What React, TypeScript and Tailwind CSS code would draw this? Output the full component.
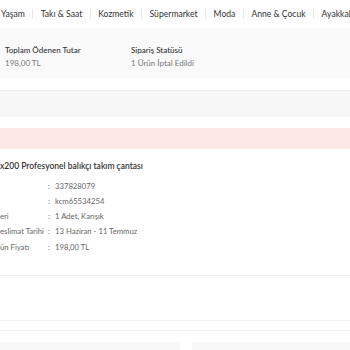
const navItems = ['Yaşam', 'Takı & Saat', 'Kozmetik', 'Süpermarket', 'Moda', 'Anne & Çocuk', 'Ayakkabı'];

const details = [
    { label: '', value: '337828079' },
    { label: '', value: 'kcm65534254' },
    { label: 'eri', value: '1 Adet, Karışık' },
    { label: 'eslimat Tarihi', value: '13 Haziran - 11 Temmuz' },
    { label: 'ün Fiyatı', value: '198,00 TL' },
];

export default function App() {
    return (
        <div className="w-[350px] h-[350px] overflow-hidden bg-white text-[#333] font-['Lato',sans-serif]">
            {/* Category nav */}
            <nav className="h-[28px] flex items-center whitespace-nowrap text-[8.6px] pl-[1px] overflow-hidden">
                {navItems.map((item, i) => (
                    <div key={item} className="flex items-center shrink-0">
                        {i > 0 && <span className="w-px h-[10px] bg-[#e8e8e8] mx-[7.5px]" />}
                        <span>{item}</span>
                    </div>
                ))}
            </nav>

            {/* Order summary */}
            <div className="bg-[#fafafa] h-[50px] pt-[16px] pl-[5px] flex text-[8px]">
                <div className="w-[126px] flex flex-col gap-[1px]">
                    <span className="leading-[12px] font-medium text-[#333]">Toplam Ödenen Tutar</span>
                    <span className="leading-[12px] text-[#777]">198,00 TL</span>
                </div>
                <div className="flex flex-col gap-[1px]">
                    <span className="leading-[12px] font-medium text-[#333]">Sipariş Statüsü</span>
                    <span className="leading-[12px] text-[#777]">1 Ürün İptal Edildi</span>
                </div>
            </div>

            <div className="h-[12px]" />
            <div className="h-[27px] bg-[#f7f7f7] border-t border-[#efefef]" />
            <div className="h-[11px]" />
            <div className="h-[21px] bg-[#fde8e6]" />

            {/* Product */}
            <div className="h-[126px] pt-[11px]">
                <div className="text-[8.5px] font-semibold leading-[12px] text-[#333] whitespace-nowrap">
                    x200 Profesyonel balıkçı takım çantası
                </div>
                <div className="mt-[7px] flex flex-col text-[7.7px] text-[#666]">
                    {details.map((row, i) => (
                        <div key={i} className="h-[15.2px] flex items-center whitespace-nowrap">
                            <span className="w-[48px]">{row.label}</span>
                            <span className="w-[7px]">:</span>
                            <span>{row.value}</span>
                        </div>
                    ))}
                </div>
            </div>

            <div className="h-px bg-[#f2f2f2]" />
            <div className="h-[44px]" />
            <div className="h-px bg-[#f2f2f2]" />
            <div className="h-[9px]" />
            <div className="h-px bg-[#f2f2f2]" />
            <div className="h-[11px]" />
            <div className="flex gap-[12px]">
                <div className="w-[180px] h-[20px] bg-[#f8f8f8]" />
                <div className="flex-1 h-[20px] bg-[#f8f8f8]" />
            </div>
        </div>
    );
}
